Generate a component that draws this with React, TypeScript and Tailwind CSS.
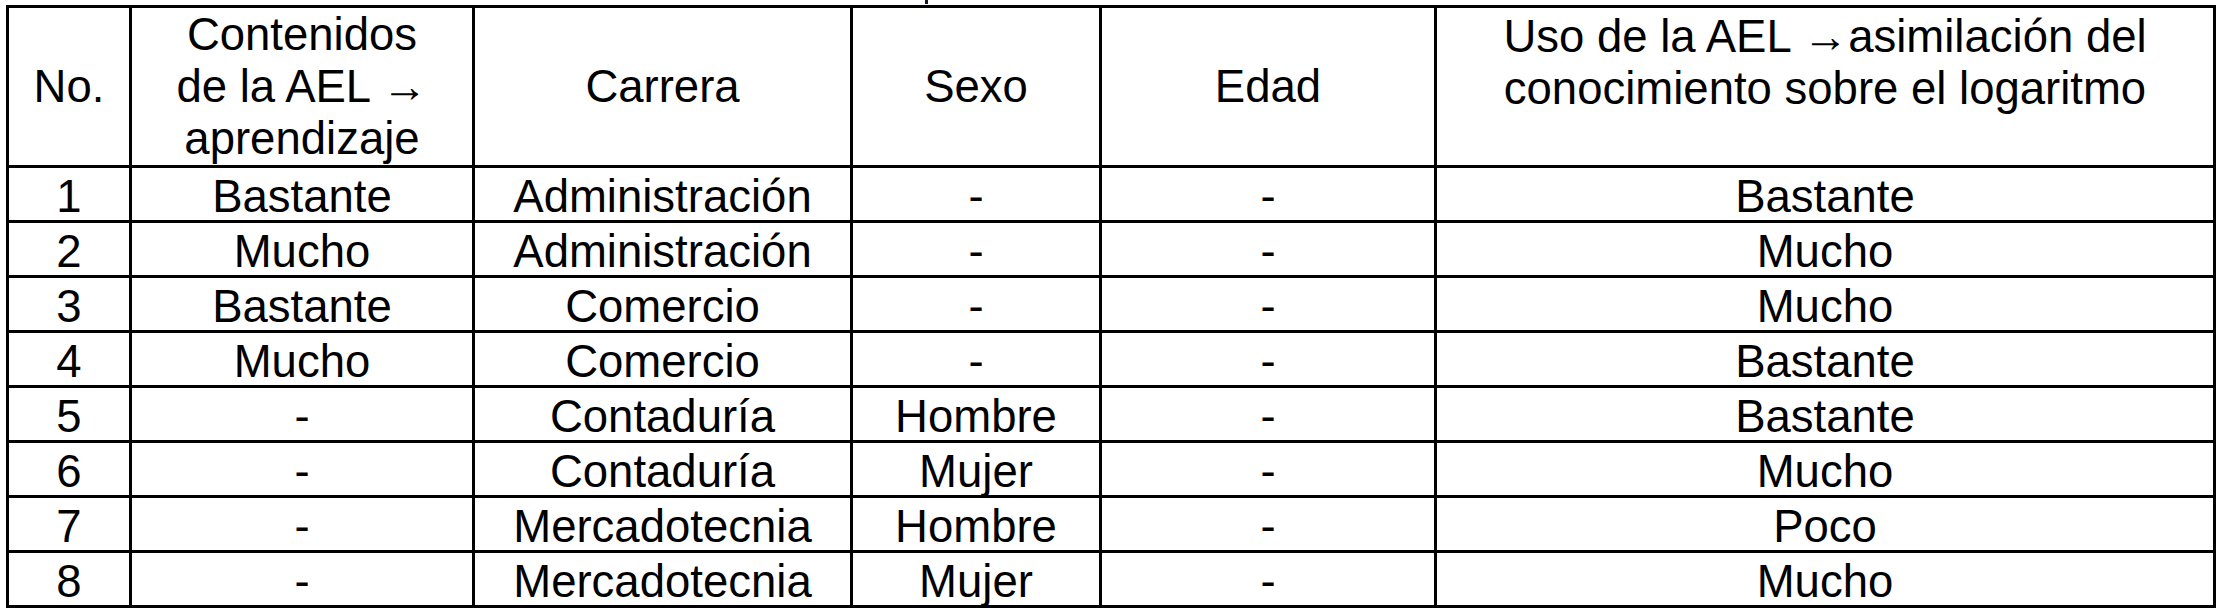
const rows = [
  { no: 1, contenidos: "Bastante", carrera: "Administración", sexo: "-", edad: "-", uso: "Bastante" },
  { no: 2, contenidos: "Mucho", carrera: "Administración", sexo: "-", edad: "-", uso: "Mucho" },
  { no: 3, contenidos: "Bastante", carrera: "Comercio", sexo: "-", edad: "-", uso: "Mucho" },
  { no: 4, contenidos: "Mucho", carrera: "Comercio", sexo: "-", edad: "-", uso: "Bastante" },
  { no: 5, contenidos: "-", carrera: "Contaduría", sexo: "Hombre", edad: "-", uso: "Bastante" },
  { no: 6, contenidos: "-", carrera: "Contaduría", sexo: "Mujer", edad: "-", uso: "Mucho" },
  { no: 7, contenidos: "-", carrera: "Mercadotecnia", sexo: "Hombre", edad: "-", uso: "Poco" },
  { no: 8, contenidos: "-", carrera: "Mercadotecnia", sexo: "Mujer", edad: "-", uso: "Mucho" },
];

const head =
  "flex items-center justify-center text-center border-r-[3px] border-b-[3px] border-black";
const cell =
  "flex items-start justify-center text-center pt-[3px] border-r-[3px] border-b-[3px] border-black";

export default function App() {
  return (
    <div
      className="min-h-screen w-full bg-white text-black text-[45.5px] leading-[52px]"
      style={{ fontFamily: '"Liberation Sans", Arial, sans-serif' }}
    >
      {/* descender of the cut-off caption above the table */}
      <div className="h-[5px] overflow-hidden pl-[925px]">
        <span className="block w-[3px] h-[4px] bg-[#111827]" />
      </div>

      <div className="ml-[6px] w-[2210px] grid grid-cols-[123px_343px_378px_249px_335px_779px] grid-rows-[160px_repeat(8,55px)] border-l-[3px] border-t-[3px] border-black">
        <div className={head}>No.</div>
        <div className={head}>
          Contenidos
          <br />
          de la AEL →
          <br />
          aprendizaje
        </div>
        <div className={head}>Carrera</div>
        <div className={head}>Sexo</div>
        <div className={head}>Edad</div>
        <div className="flex items-start justify-center text-center pt-[3px] border-r-[3px] border-b-[3px] border-black">
          <span>
            Uso de la AEL →asimilación del
            <br />
            conocimiento sobre el logaritmo
          </span>
        </div>

        {rows.map((r) => (
          <div key={r.no} className="contents">
            <div className={cell}>{r.no}</div>
            <div className={cell}>{r.contenidos}</div>
            <div className={cell}>{r.carrera}</div>
            <div className={cell}>{r.sexo}</div>
            <div className={cell}>{r.edad}</div>
            <div className={cell}>{r.uso}</div>
          </div>
        ))}
      </div>
    </div>
  );
}
